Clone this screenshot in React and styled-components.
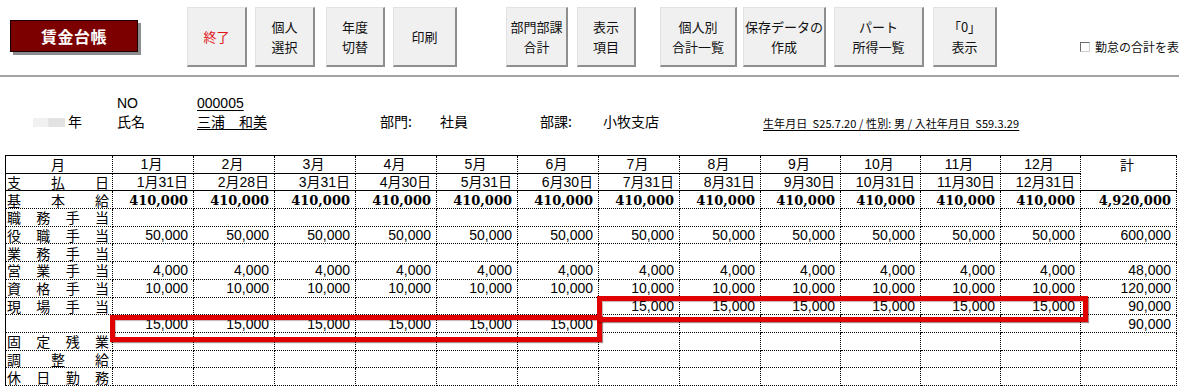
import React from "react";
import styled, { createGlobalStyle } from "styled-components";

const GlobalStyle = createGlobalStyle`
  html, body {
    margin: 0;
    padding: 0;
    background: #fff;
    overflow: hidden;
  }
  body {
    font-family: "Noto Sans CJK JP", sans-serif;
    color: #000;
  }
`;

const Page = styled.div`
  width: 1179px;
  height: 387px;
  overflow: hidden;
`;

// ---- toolbar ----
const Toolbar = styled.div`
  display: flex;
  align-items: flex-start;
  height: 75px;
  border-bottom: 2px solid #a3a3a3;
  white-space: nowrap;
  overflow: hidden;
`;

const TitleBox = styled.div`
  margin: 20px 0 0 10px;
  width: 128px;
  height: 32px;
  flex: none;
  box-sizing: border-box;
  display: flex;
  align-items: center;
  justify-content: center;
  background: #7d0000;
  border: 1px solid #1a0000;
  box-shadow: 3px 3px 0 #8c8c8c;
  color: #fff;
  font-size: 16px;
  font-weight: 700;
  letter-spacing: 0.5px;
`;

const ToolButton = styled.div`
  margin: 7px 0 0 ${(p) => p.$ml}px;
  width: ${(p) => p.$w}px;
  height: 60px;
  flex: none;
  box-sizing: border-box;
  display: flex;
  flex-direction: column;
  align-items: center;
  justify-content: center;
  background: #f0f0f0;
  border-top: 1px solid #e2e2e2;
  border-left: 1px solid #e2e2e2;
  border-right: 2px solid #8e8e8e;
  border-bottom: 2px solid #8e8e8e;
  color: ${(p) => (p.$danger ? "#e0161b" : "#111")};
  font-size: 13px;
  line-height: 20px;
`;

const CheckWrap = styled.label`
  display: flex;
  align-items: center;
  gap: 5px;
  flex: none;
  margin: 38px 0 0 83px;
  font-size: 12px;
  color: #111;
`;

const CheckBox = styled.span`
  width: 10px;
  height: 10px;
  flex: none;
  box-sizing: border-box;
  border: 1px solid #6b6b6b;
  border-right-color: #d0d0d0;
  border-bottom-color: #d0d0d0;
  background: #fff;
`;

// ---- info area ----
const Info = styled.div`
  height: 78px;
  box-sizing: border-box;
  padding-top: 17px;
  font-size: 14px;
`;

const InfoLine = styled.div`
  display: flex;
  align-items: center;
  height: 18px;
  line-height: 18px;
  white-space: nowrap;
`;

const Field = styled.div`
  width: ${(p) => p.$w}px;
  flex: none;
  font-family: ${(p) =>
    p.$latin ? '"Liberation Sans", "Noto Sans CJK JP", sans-serif' : '"Noto Sans CJK JP", sans-serif'};
  font-size: 14px;
  text-decoration: ${(p) => (p.$under ? "underline" : "none")};
  text-underline-offset: 2px;
`;

const Redacted = styled.span`
  margin: 2px 3px 0 33px;
  width: 32px;
  height: 9px;
  flex: none;
  background: linear-gradient(90deg, #f1f1f1 0%, #f1f1f1 45%, #e2e2e2 50%, #e2e2e2 100%);
  filter: blur(0.6px);
`;

const Profile = styled.span`
  margin-top: 3px;
  font-size: 11px;
  text-decoration: underline;
  text-underline-offset: 2px;
  letter-spacing: 0.1px;
`;

// ---- ledger sheet ----
const Sheet = styled.div`
  position: relative;
  margin-left: 5px;
  display: grid;
  grid-template-columns: 107px repeat(8, 81px) repeat(4, 80px) 96px;
  grid-auto-rows: 17.7px;
  width: max-content;
  border-top: 1px solid #000;
  border-left: 1px solid #000;
`;

const Cell = styled.div`
  box-sizing: border-box;
  display: flex;
  align-items: center;
  justify-content: ${(p) => (p.$center ? "center" : "flex-end")};
  padding: 1px 5px 0 2px;
  border-right: 1px dotted #000;
  border-bottom: ${(p) => (p.$open ? "none" : `1px ${p.$solid ? "solid" : "dotted"} #000`)};
  font-family: ${(p) =>
    p.$bold ? '"DejaVu Serif", serif' : '"Liberation Sans", "Noto Sans CJK JP", sans-serif'};
  font-weight: ${(p) => (p.$bold ? 700 : 400)};
  font-size: ${(p) => (p.$bold ? 13 : 14)}px;
  line-height: 15px;
  white-space: nowrap;
  overflow: hidden;
`;

const LabelCell = styled(Cell)`
  justify-content: ${(p) => (p.$center ? "center" : "space-between")};
  padding: 1px 3px 0 1px;
  font-family: "Noto Sans CJK JP", sans-serif;
`;

const Highlight = styled.div`
  position: absolute;
  left: ${(p) => p.$x}px;
  top: ${(p) => p.$y}px;
  width: ${(p) => p.$w}px;
  height: ${(p) => p.$h}px;
  box-sizing: border-box;
  border: 5px solid #e10000;
  box-shadow: 1px 1px 1px rgba(60, 0, 0, 0.45), inset 1px 1px 1px rgba(60, 0, 0, 0.3);
  pointer-events: none;
`;

const months = Array.from({ length: 12 }, (_, i) => i + 1);
const lastDay = [31, 28, 31, 30, 31, 30, 31, 31, 30, 31, 30, 31];
const fill = (v) => Array(12).fill(v);

const rows = [
  { label: "支払日", values: months.map((m, i) => `${m}月${lastDay[i]}日`), total: "", solid: true },
  { label: "基本給", values: fill("410,000"), total: "4,920,000", bold: true },
  { label: "職務手当", values: fill(""), total: "" },
  { label: "役職手当", values: fill("50,000"), total: "600,000" },
  { label: "業務手当", values: fill(""), total: "" },
  { label: "営業手当", values: fill("4,000"), total: "48,000" },
  { label: "資格手当", values: fill("10,000"), total: "120,000" },
  { label: "現場手当", values: months.map((m) => (m > 6 ? "15,000" : "")), total: "90,000" },
  { label: "", values: months.map((m) => (m <= 6 ? "15,000" : "")), total: "90,000" },
  { label: "固定残業", values: fill(""), total: "" },
  { label: "調整給", values: fill(""), total: "" },
  { label: "休日勤務", values: fill(""), total: "" },
];

const leftButtons = [
  { text: ["終了"], w: 60, ml: 49, danger: true },
  { text: ["個人", "選択"], w: 60, ml: 8 },
  { text: ["年度", "切替"], w: 59, ml: 11 },
  { text: ["印刷"], w: 64, ml: 8 },
];

const rightButtons = [
  { text: ["部門部課", "合計"], w: 62, ml: 49 },
  { text: ["表示", "項目"], w: 59, ml: 9 },
  { text: ["個人別", "合計一覧"], w: 77, ml: 24 },
  { text: ["保存データの", "作成"], w: 83, ml: 6 },
  { text: ["パート", "所得一覧"], w: 90, ml: 8 },
  { text: ["「0」", "表示"], w: 64, ml: 9 },
];

export default function App() {
  return (
    <Page>
      <GlobalStyle />
      <Toolbar>
        <TitleBox>賃金台帳</TitleBox>
        {[...leftButtons, ...rightButtons].map((b, i) => (
          <ToolButton key={i} $w={b.w} $ml={b.ml} $danger={b.danger}>
            {b.text.map((t) => (
              <span key={t}>{t}</span>
            ))}
          </ToolButton>
        ))}
        <CheckWrap>
          <CheckBox />
          勤怠の合計を表示
        </CheckWrap>
      </Toolbar>

      <Info>
        <InfoLine>
          <Field $w={117} />
          <Field $w={80} $latin>NO</Field>
          <Field $w={120} $latin $under>000005</Field>
        </InfoLine>
        <InfoLine>
          <Redacted />
          <Field $w={49}>年</Field>
          <Field $w={80}>氏名</Field>
          <Field $w={183} $under>三浦　和美</Field>
          <Field $w={60}>部門:</Field>
          <Field $w={100}>社員</Field>
          <Field $w={63}>部課:</Field>
          <Field $w={160}>小牧支店</Field>
          <Profile>生年月日&nbsp;&nbsp;S25.7.20 / 性別: 男 / 入社年月日&nbsp;&nbsp;S59.3.29</Profile>
        </InfoLine>
      </Info>

      <Sheet>
        <LabelCell $center $solid>月</LabelCell>
        {months.map((m) => (
          <Cell key={m} $center $solid>{m}月</Cell>
        ))}
        <Cell $center $open>計</Cell>

        {rows.map((r, ri) => (
          <React.Fragment key={ri}>
            <LabelCell $solid={r.solid}>
              {Array.from(r.label).map((c, ci) => (
                <span key={ci}>{c}</span>
              ))}
            </LabelCell>
            {r.values.map((v, vi) => (
              <Cell key={vi} $bold={r.bold} $solid={r.solid}>{v}</Cell>
            ))}
            <Cell $bold={r.bold} $solid={r.solid}>{r.total}</Cell>
          </React.Fragment>
        ))}

        <Highlight $x={104} $y={159} $w={492} $h={27} />
        <Highlight $x={591} $y={140} $w={491} $h={26} />
      </Sheet>
    </Page>
  );
}
